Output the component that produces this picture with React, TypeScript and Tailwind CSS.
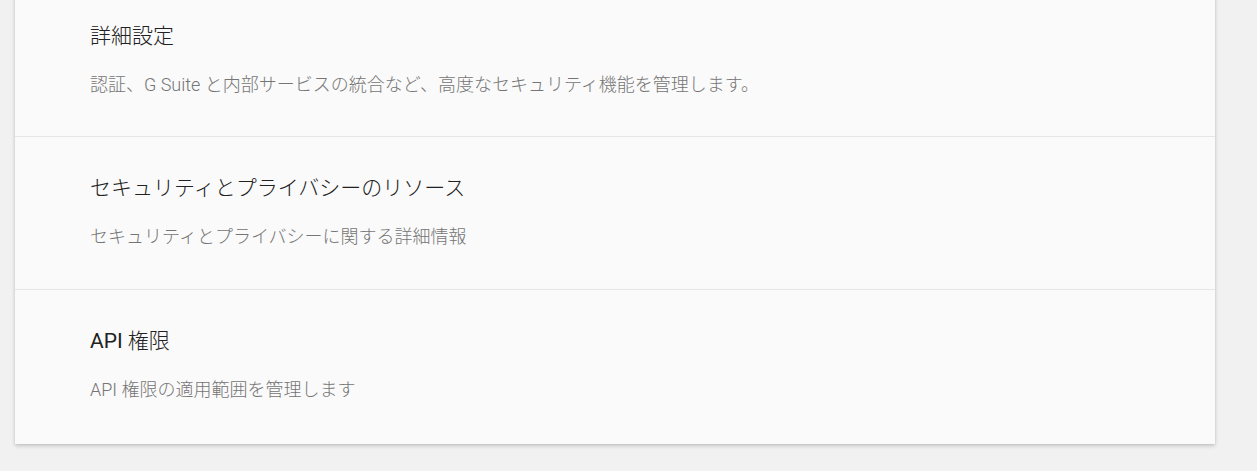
import React from "react";

const L = ({ children }: { children: React.ReactNode }) => (
  <span className="font-normal">{children}</span>
);

const rows: { title: React.ReactNode; desc: React.ReactNode; h: string }[] = [
  {
    title: "詳細設定",
    desc: "認証、G Suite と内部サービスの統合など、高度なセキュリティ機能を管理します。",
    h: "h-[152px]",
  },
  {
    title: "セキュリティとプライバシーのリソース",
    desc: "セキュリティとプライバシーに関する詳細情報",
    h: "h-[153px]",
  },
  {
    title: (
      <>
        <L>API</L> 権限
      </>
    ),
    desc: "API 権限の適用範囲を管理します",
    h: "h-[154px]",
  },
];

export default function App() {
  return (
    <div
      className="min-h-[471px] w-full bg-[#f1f1f1] overflow-hidden"
      style={{ fontFamily: 'Roboto, "Noto Sans CJK JP", sans-serif' }}
    >
      <div className="ml-[15px] -mt-[15px] w-[1200px] bg-[#fafafa] shadow-[0_2px_4px_rgba(0,0,0,0.18),0_0_2px_rgba(0,0,0,0.08)]">
        {rows.map((r, i) => (
          <div
            key={i}
            className={`${r.h} pl-[75px] pt-[37px] ${i < rows.length - 1 ? "border-b border-[#e6e6e6]" : ""}`}
          >
            <div className="text-[21px] leading-[28px] font-light text-[#212121]">{r.title}</div>
            <div className="mt-[23px] text-[18px] leading-[24px] font-light text-[#757575]">{r.desc}</div>
          </div>
        ))}
      </div>
    </div>
  );
}
